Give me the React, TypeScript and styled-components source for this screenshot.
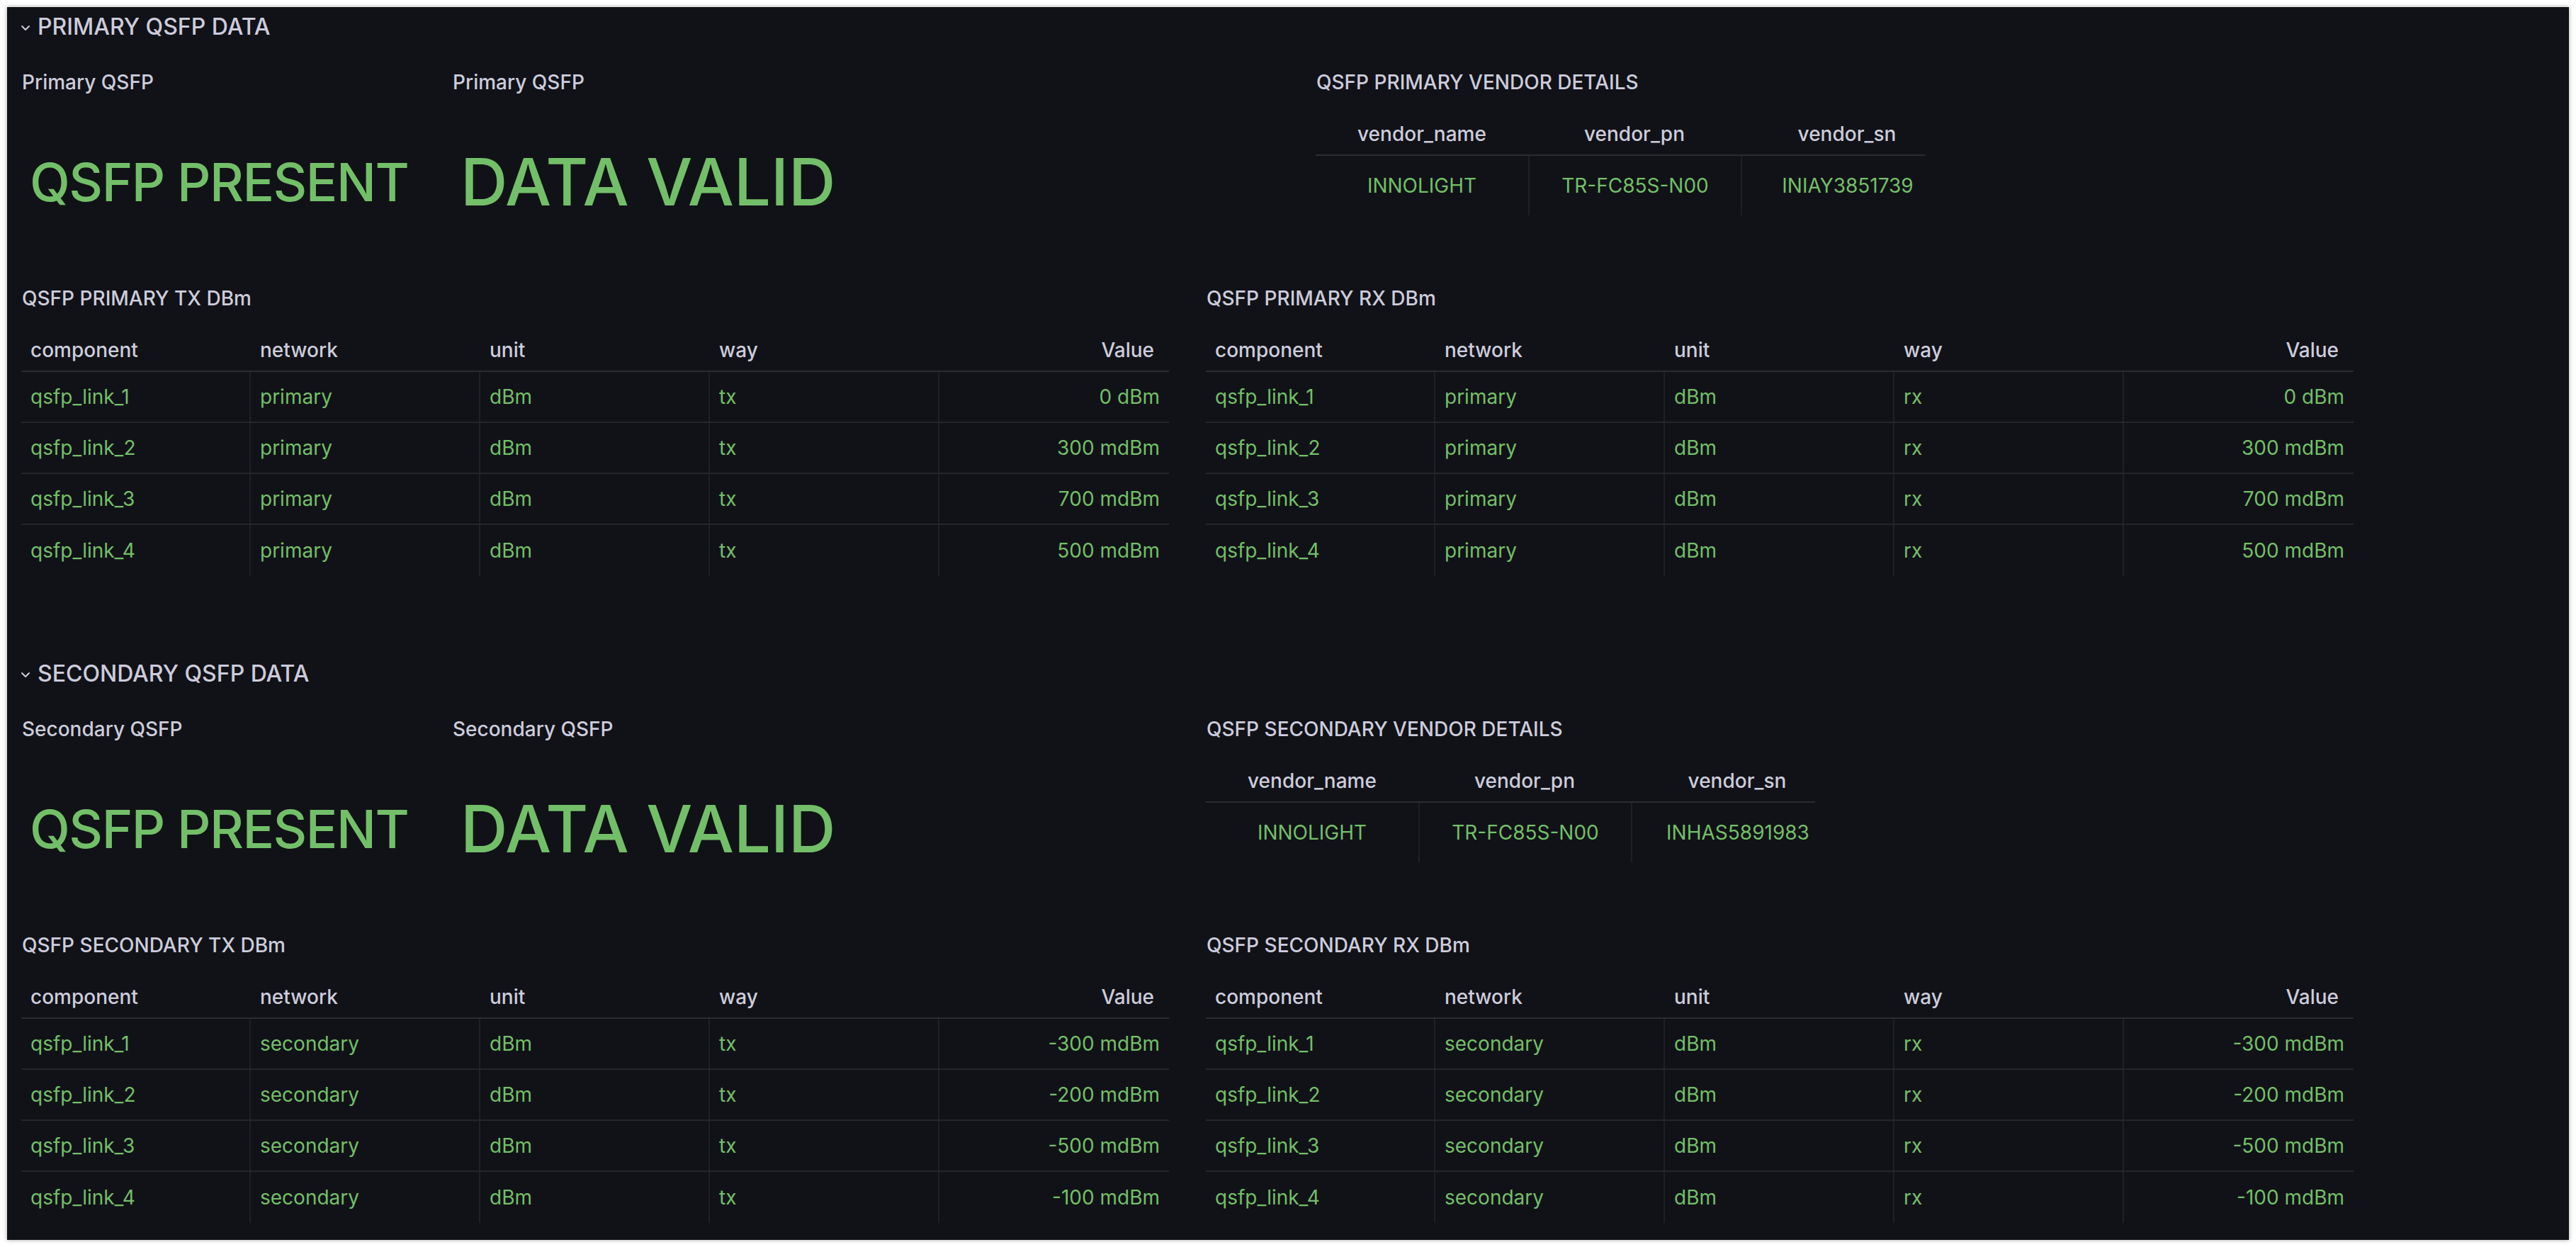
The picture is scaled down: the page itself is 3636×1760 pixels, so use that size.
import React from "react";
import styled, { createGlobalStyle } from "styled-components";

const GlobalStyle = createGlobalStyle`
  html, body { margin: 0; padding: 0; background: #ffffff; }
  body { font-family: Inter, "Noto Sans", "Liberation Sans", sans-serif; }
  * { box-sizing: border-box; }
`;

const GREEN = "#73bf69";
const TEXT = "#ccccdc";

const Page = styled.div`
  margin: 10px;
  width: 3616px;
  height: 1740px;
  background: #111217;
  box-shadow: 0 0 6px rgba(0, 0, 0, 0.35);
  overflow: hidden;
  display: flex;
  flex-direction: column;
  gap: 110px;
  color: ${TEXT};
  font-family: Inter, "Noto Sans", "Liberation Sans", sans-serif;
`;

const Section = styled.section`
  display: flex;
  flex-direction: column;
`;

const RowHeader = styled.div`
  height: 54px;
  display: flex;
  align-items: center;
  gap: 10px;
  padding-left: 19px;
  font-size: 32px;
  font-weight: 500;
  color: ${TEXT};
  white-space: nowrap;
`;

const Chevron = styled.svg`
  width: 14px;
  height: 10px;
  margin-top: 6px;
  flex: none;
`;

const TopRow = styled.div<{ $cols: string }>`
  display: grid;
  grid-template-columns: ${(p) => p.$cols};
  height: 341px;
  padding-top: 36px;
  padding-left: 20px;
`;

const BottomRow = styled.div`
  display: grid;
  grid-template-columns: 1620px 1620px;
  column-gap: 52px;
  padding-left: 20px;
`;

const Panel = styled.div`
  display: flex;
  flex-direction: column;
  min-width: 0;
`;

const PanelTitle = styled.div`
  font-size: 28px;
  font-weight: 500;
  line-height: 32px;
  color: ${TEXT};
  white-space: nowrap;
  padding-left: 1px;
`;

const StatBody = styled.div`
  height: 250px;
  display: flex;
  align-items: center;
  padding-left: 12px;
`;

const StatValue = styled.div<{ $size: number; $track: number }>`
  font-size: ${(p) => p.$size}px;
  letter-spacing: ${(p) => p.$track}px;
  font-weight: 500;
  line-height: 1;
  color: ${GREEN};
  white-space: nowrap;
`;

/* Vendor table */
const VendorTable = styled.div`
  margin-top: 28px;
  width: 860px;
`;

const VendorHeadRow = styled.div`
  display: grid;
  grid-template-columns: repeat(3, 300px);
  height: 60px;
  border-bottom: 2px solid #2b2c32;
`;

const VendorHeadCell = styled.div`
  display: flex;
  align-items: center;
  justify-content: center;
  font-size: 28px;
  font-weight: 500;
  color: ${TEXT};
`;

const VendorRow = styled.div`
  display: grid;
  grid-template-columns: repeat(3, 300px);
  height: 84px;
`;

const VendorCell = styled.div<{ $first?: boolean }>`
  display: flex;
  align-items: center;
  justify-content: center;
  font-size: 28px;
  color: ${GREEN};
  border-left: ${(p) => (p.$first ? "none" : "2px solid #1f2025")};
`;

/* Data table */
const DataTable = styled.div`
  margin-top: 28px;
  width: 1620px;
`;

const HeadRow = styled.div`
  display: grid;
  grid-template-columns: repeat(5, 1fr);
  height: 60px;
  border-bottom: 2px solid #2b2c32;
`;

const HeadCell = styled.div<{ $right?: boolean }>`
  display: flex;
  align-items: center;
  justify-content: ${(p) => (p.$right ? "flex-end" : "flex-start")};
  padding: ${(p) => (p.$right ? "0 21px 0 13px" : "0 13px")};
  font-size: 28px;
  font-weight: 500;
  color: ${TEXT};
`;

const BodyRow = styled.div<{ $last?: boolean }>`
  display: grid;
  grid-template-columns: repeat(5, 1fr);
  height: 72px;
  border-bottom: ${(p) => (p.$last ? "none" : "2px solid #25262b")};
`;

const BodyCell = styled.div<{ $right?: boolean }>`
  display: flex;
  align-items: center;
  justify-content: ${(p) => (p.$right ? "flex-end" : "flex-start")};
  padding: 0 13px;
  font-size: 28px;
  color: ${GREEN};
  white-space: nowrap;
  border-right: ${(p) => (p.$right ? "none" : "2px solid #1f2025")};
`;

type Row = { component: string; network: string; unit: string; way: string; value: string };

const makeRows = (network: string, way: string, values: string[]): Row[] =>
  values.map((v, i) => ({
    component: `qsfp_link_${i + 1}`,
    network,
    unit: "dBm",
    way,
    value: v,
  }));

const DbmTable: React.FC<{ title: string; rows: Row[] }> = ({ title, rows }) => (
  <Panel>
    <PanelTitle>{title}</PanelTitle>
    <DataTable>
      <HeadRow>
        <HeadCell>component</HeadCell>
        <HeadCell>network</HeadCell>
        <HeadCell>unit</HeadCell>
        <HeadCell>way</HeadCell>
        <HeadCell $right>Value</HeadCell>
      </HeadRow>
      {rows.map((r, i) => (
        <BodyRow key={r.component} $last={i === rows.length - 1}>
          <BodyCell>{r.component}</BodyCell>
          <BodyCell>{r.network}</BodyCell>
          <BodyCell>{r.unit}</BodyCell>
          <BodyCell>{r.way}</BodyCell>
          <BodyCell $right>{r.value}</BodyCell>
        </BodyRow>
      ))}
    </DataTable>
  </Panel>
);

const VendorPanel: React.FC<{ title: string; values: string[] }> = ({ title, values }) => (
  <Panel>
    <PanelTitle>{title}</PanelTitle>
    <VendorTable>
      <VendorHeadRow>
        <VendorHeadCell>vendor_name</VendorHeadCell>
        <VendorHeadCell>vendor_pn</VendorHeadCell>
        <VendorHeadCell>vendor_sn</VendorHeadCell>
      </VendorHeadRow>
      <VendorRow>
        {values.map((v, i) => (
          <VendorCell key={v} $first={i === 0}>
            {v}
          </VendorCell>
        ))}
      </VendorRow>
    </VendorTable>
  </Panel>
);

const StatPanel: React.FC<{ title: string; value: string; size: number; track: number }> = ({ title, value, size, track }) => (
  <Panel>
    <PanelTitle>{title}</PanelTitle>
    <StatBody>
      <StatValue $size={size} $track={track}>{value}</StatValue>
    </StatBody>
  </Panel>
);

const ChevronIcon = () => (
  <Chevron viewBox="0 0 14 10">
    <polyline points="2,2 7,7 12,2" fill="none" stroke={TEXT} strokeWidth="2" strokeLinecap="round" strokeLinejoin="round" />
  </Chevron>
);

type SectionProps = {
  heading: string;
  statTitle: string;
  vendorTitle: string;
  vendorValues: string[];
  cols: string;
  network: string;
  label: string;
  values: string[];
};

const QsfpSection: React.FC<SectionProps> = ({ heading, statTitle, vendorTitle, vendorValues, cols, network, label, values }) => (
  <Section>
    <RowHeader>
      <ChevronIcon />
      {heading}
    </RowHeader>
    <TopRow $cols={cols}>
      <StatPanel title={statTitle} value="QSFP PRESENT" size={74} track={-1.5} />
      <StatPanel title={statTitle} value="DATA VALID" size={92} track={0} />
      <VendorPanel title={vendorTitle} values={vendorValues} />
    </TopRow>
    <BottomRow>
      <DbmTable title={`QSFP ${label} TX DBm`} rows={makeRows(network, "tx", values)} />
      <DbmTable title={`QSFP ${label} RX DBm`} rows={makeRows(network, "rx", values)} />
    </BottomRow>
  </Section>
);

export default function App() {
  return (
    <>
      <GlobalStyle />
      <Page>
        <QsfpSection
          heading="PRIMARY QSFP DATA"
          statTitle="Primary QSFP"
          vendorTitle="QSFP PRIMARY VENDOR DETAILS"
          vendorValues={["INNOLIGHT", "TR-FC85S-N00", "INIAY3851739"]}
          cols="608px 1219px 1fr"
          network="primary"
          label="PRIMARY"
          values={["0 dBm", "300 mdBm", "700 mdBm", "500 mdBm"]}
        />
        <QsfpSection
          heading="SECONDARY QSFP DATA"
          statTitle="Secondary QSFP"
          vendorTitle="QSFP SECONDARY VENDOR DETAILS"
          vendorValues={["INNOLIGHT", "TR-FC85S-N00", "INHAS5891983"]}
          cols="608px 1064px 1fr"
          network="secondary"
          label="SECONDARY"
          values={["-300 mdBm", "-200 mdBm", "-500 mdBm", "-100 mdBm"]}
        />
      </Page>
    </>
  );
}
